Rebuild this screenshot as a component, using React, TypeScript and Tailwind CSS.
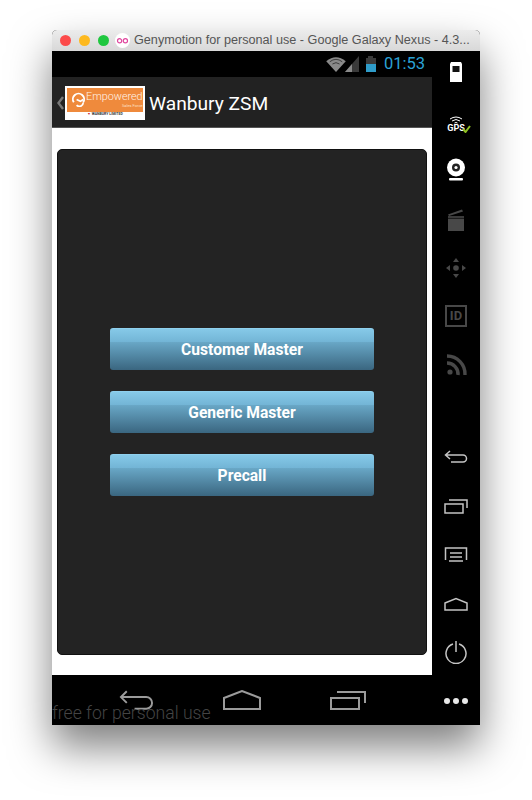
const buttons = ["Customer Master", "Generic Master", "Precall"];

const TitleBar = () => (
  <div className="flex h-[21px] items-center rounded-t-[5px] bg-gradient-to-b from-[#ececec] to-[#d8d8d8] pl-[8px]">
    <span className="h-[11px] w-[11px] rounded-full bg-[#fc4a4a]" />
    <span className="ml-[8px] h-[11px] w-[11px] rounded-full bg-[#fdb91f]" />
    <span className="ml-[8px] h-[11px] w-[11px] rounded-full bg-[#1fc73f]" />
    <svg className="ml-[6px]" width="15" height="15" viewBox="0 0 15 15">
      <circle cx="7.5" cy="7.5" r="7.5" fill="#fff" />
      <circle cx="4.6" cy="7.8" r="2.1" fill="none" stroke="#e0479e" strokeWidth="1.2" />
      <circle cx="10.4" cy="7.8" r="2.1" fill="none" stroke="#e0479e" strokeWidth="1.2" />
    </svg>
    <span className="ml-[4px] whitespace-nowrap text-[12.65px] text-[#555555]">
      Genymotion for personal use - Google Galaxy Nexus - 4.3...
    </span>
  </div>
);

const StatusBar = () => (
  <div className="flex h-[26px] items-center justify-end bg-black pr-[7px]">
    <svg width="20" height="16" viewBox="0 0 22 18">
      <path d="M0 6 Q11 -3 22 6 L11 18 Z" fill="#8a8a8a" />
      <path d="M4 6.5 Q11 1 18 6.5 M7 9 Q11 6 15 9" fill="none" stroke="#333" strokeWidth="1" />
    </svg>
    <svg width="14" height="16" viewBox="0 0 14 16" className="-ml-[1px]">
      <path d="M14 0 V16 H0 Z" fill="#3a3a3a" />
      <path d="M7 8 V16 H0 Z" fill="#8a8a8a" />
    </svg>
    <div className="ml-[7px] flex h-[16px] w-[10px] flex-col">
      <div className="mx-auto h-[2px] w-[5px] bg-[#3a3a3a]" />
      <div className="h-[6px] bg-[#3a3a3a]" />
      <div className="h-[8px] bg-[#2f9cc9]" />
    </div>
    <span className="ml-[8px] text-[16.5px] leading-none text-[#2ba3d6]">01:53</span>
  </div>
);

const Logo = () => (
  <div className="flex h-[34px] w-[80px] flex-col bg-white p-[2px]">
    <div className="flex h-[24px] items-center bg-[#ef8a3c] pl-[4px]">
      <svg width="15" height="15" viewBox="0 0 16 16">
        <path d="M3 11 A6 6 0 1 1 13 11" fill="none" stroke="#fff" strokeWidth="2" />
        <path d="M6 8 L10 10 L13 8 M6 14 A4 4 0 0 0 13 11" fill="none" stroke="#fff" strokeWidth="1.8" />
      </svg>
      <div className="flex flex-col items-end leading-none text-[#fff3e8]">
        <span className="text-[10.8px] font-light leading-[12px]">Empowered</span>
        <span className="text-[4px] leading-[5px] text-[#fde0c8]">Sales Force</span>
      </div>
    </div>
    <div className="flex flex-1 items-center justify-center text-[3.5px] font-bold text-[#333333]">
      <span className="mr-[1px] text-[#c8202f]">▼</span>WANBURY LIMITED
    </div>
  </div>
);

const ActionBar = () => (
  <div className="flex h-[51px] items-center border-b border-[#555555] bg-[#222222] pt-[1px]">
    <svg className="ml-[4px]" width="9" height="14" viewBox="0 0 9 14">
      <path d="M7 1 L2.5 7 L7 13" fill="none" stroke="#777777" strokeWidth="2.4" />
    </svg>
    <Logo />
    <span className="ml-[4px] pt-[3px] text-[19.2px] text-white">Wanbury ZSM</span>
  </div>
);

const Content = () => (
  <div className="flex-1 bg-white px-[5px] pb-[20px] pt-[21px]">
    <div className="flex h-full flex-col items-center justify-center gap-[21px] rounded-[5px] border border-[#111111] bg-[#232323] pt-[19px]">
      {buttons.map((label) => (
        <button
          key={label}
          className="flex h-[42px] w-[264px] items-center justify-center rounded-[3px] border-t border-[#8fd0ee] bg-[linear-gradient(#86c9e8_0%,#73b5d6_31%,#68a6c5_33%,#3a6680_100%)] pt-[3px] text-[15.6px] font-bold text-white"
        >
          {label}
        </button>
      ))}
    </div>
  </div>
);

const NavBar = () => (
  <div className="relative flex h-[50px] items-center bg-black pl-[67px]">
    <svg width="35" height="20" viewBox="0 0 36 20" fill="none" stroke="#9b9b9b" strokeWidth="2">
      <path d="M8 1 L2 7 L8 13 M2 7 H28 A6 6 0 0 1 28 19 H16" />
    </svg>
    <svg className="ml-[69px]" width="38" height="20" viewBox="0 0 38 20" fill="none" stroke="#9b9b9b" strokeWidth="2">
      <path d="M1 8 L19 1 L37 8 V19 H1 Z" />
    </svg>
    <svg className="ml-[69px]" width="36" height="20" viewBox="0 0 36 20" fill="none" stroke="#9b9b9b" strokeWidth="2">
      <rect x="1" y="8" width="28" height="11" />
      <path d="M7 2 H35 V13" />
    </svg>
    <span className="absolute bottom-[0px] left-0 text-[17.6px] font-light leading-[24px] text-[#444444]">
      free for personal use
    </span>
  </div>
);

const SidePanel = () => (
  <div className="flex w-[48px] flex-col items-center bg-black pt-[9px] text-white">
    <svg width="24" height="24" viewBox="0 0 24 24">
      <path d="M7 2 H17 L18 4 V22 H6 V4 Z" fill="#fff" />
      <rect x="8.5" y="6" width="7" height="6" fill="#111" />
    </svg>
    <div className="mt-[28px] flex h-[24px] flex-col items-center justify-center">
      <svg width="14" height="8" viewBox="0 0 14 8" fill="none" stroke="#fff" strokeWidth="1">
        <path d="M1 3 Q7 -1 13 3 M3 5 Q7 2 11 5 M5.5 7 Q7 6 8.5 7" />
      </svg>
      <div className="relative text-[9px] font-bold leading-[9px]">
        GPS
        <svg className="absolute -right-[6px] top-[1px]" width="9" height="8" viewBox="0 0 9 8" fill="none" stroke="#8ebf22" strokeWidth="2">
          <path d="M1 4 L3.5 7 L8 1" />
        </svg>
      </div>
    </div>
    <svg className="mt-[22px]" width="24" height="24" viewBox="0 0 24 24">
      <circle cx="12" cy="9.5" r="9" fill="#fff" />
      <circle cx="12" cy="9.5" r="4" fill="#222" />
      <circle cx="12" cy="9.5" r="1.6" fill="#fff" />
      <rect x="5" y="20" width="14" height="2.5" rx="1" fill="#fff" />
    </svg>
    <svg className="mt-[26px]" width="24" height="24" viewBox="0 0 24 24" fill="#484848">
      <rect x="4" y="11" width="16" height="12" />
      <rect x="4" y="8" width="16" height="2.5" fill="#3a3a3a" />
      <path d="M4 6.5 L18 1.5 L19 3.5 L5 8 Z" />
    </svg>
    <svg className="mt-[24px]" width="24" height="24" viewBox="0 0 24 24" fill="#484848">
      <circle cx="12" cy="12" r="2.8" />
      <path d="M12 2 L15 6 H9 Z M12 22 L9 18 H15 Z M2 12 L6 9 V15 Z M22 12 L18 15 V9 Z" />
    </svg>
    <div className="mt-[25px] flex h-[22px] w-[22px] items-center justify-center border-2 border-[#484848] text-[13px] font-bold text-[#484848]">
      ID
    </div>
    <svg className="mt-[26px]" width="24" height="24" viewBox="0 0 24 24" fill="none" stroke="#484848" strokeWidth="3.4">
      <path d="M3 3 A18 18 0 0 1 21 22 M3 10 A11 11 0 0 1 14 22" />
      <circle cx="6" cy="19" r="2.6" fill="#484848" stroke="none" />
    </svg>
    <svg className="mt-[68px]" width="24" height="24" viewBox="0 0 24 24" fill="none" stroke="#c4c4c4" strokeWidth="1.5">
      <path d="M6 6 L1.5 10 L6 14 M1.5 10 H19 A3.5 3.5 0 0 1 19 17 H7" />
    </svg>
    <svg className="mt-[25px]" width="24" height="24" viewBox="0 0 24 24" fill="none" stroke="#c4c4c4" strokeWidth="1.5">
      <rect x="1" y="10" width="18" height="9" />
      <path d="M5 6 H23 V14" />
    </svg>
    <svg className="mt-[24px]" width="24" height="24" viewBox="0 0 24 24" fill="none" stroke="#c4c4c4" strokeWidth="1.5">
      <path d="M1.5 18 V6 H22.5 V18 M1 6 H23 M6 11 H18 M6 15 H18 M5 19 H19" />
    </svg>
    <svg className="mt-[26px]" width="24" height="24" viewBox="0 0 24 24" fill="none" stroke="#c4c4c4" strokeWidth="1.5">
      <path d="M1 11 L12 6.5 L23 11 V18 H1 Z" />
    </svg>
    <svg className="mt-[24px]" width="24" height="24" viewBox="0 0 24 24" fill="none" stroke="#c4c4c4" strokeWidth="1.5">
      <path d="M9 4 A10 10 0 1 0 15 4 M12 1 V12" />
    </svg>
    <div className="mt-[34px] flex gap-[3px]">
      <span className="h-[6px] w-[6px] rounded-full bg-[#e8e8e8]" />
      <span className="h-[6px] w-[6px] rounded-full bg-[#e8e8e8]" />
      <span className="h-[6px] w-[6px] rounded-full bg-[#e8e8e8]" />
    </div>
  </div>
);

export default function App() {
  return (
    <div className="h-[800px] w-[532px] overflow-hidden bg-white pl-[52px] pt-[30px] font-['Roboto',sans-serif]">
      <div className="flex h-[695px] w-[428px] flex-col rounded-[5px] bg-black shadow-[0_22px_42px_rgba(0,0,0,0.5)]">
        <div className="font-['Liberation_Sans',sans-serif]">
          <TitleBar />
        </div>
        <div className="flex flex-1">
          <div className="flex w-[380px] flex-col">
            <StatusBar />
            <ActionBar />
            <Content />
            <NavBar />
          </div>
          <SidePanel />
        </div>
      </div>
    </div>
  );
}
